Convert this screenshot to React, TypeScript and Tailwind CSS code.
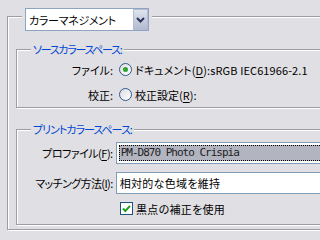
import React from "react";

const font = { fontFamily: '"Noto Sans CJK JP", "Noto Sans", sans-serif' };

function Radio({ checked }: { checked?: boolean }) {
  return (
    <div className="w-[13px] h-[13px] rounded-full border border-[#2f5a8a] bg-gradient-to-br from-[#dcdde3] to-white flex items-center justify-center shrink-0">
      {checked && <div className="w-[5px] h-[5px] rounded-full bg-[#2ea52e]" />}
    </div>
  );
}

function Check() {
  return (
    <div className="w-[13px] h-[13px] border border-[#1c5180] bg-white flex items-center justify-center shrink-0">
      <svg width="9" height="9" viewBox="0 0 9 9">
        <path d="M1 4.5 L3.3 7 L8 1.8" stroke="#21a121" strokeWidth="2" fill="none" />
      </svg>
    </div>
  );
}

function U({ c }: { c: string }) {
  return <span className="underline underline-offset-2">{c}</span>;
}

export default function App() {
  return (
    <div
      className="w-[320px] h-[240px] overflow-hidden bg-[#e0dfe3] pt-[16px] pl-[7px] text-[11px] leading-[12px] text-black [font-feature-settings:'palt']"
      style={font}
    >
      <div className="w-[330px] h-[214px] border border-[#9d9da1] shadow-[inset_1px_1px_0_#fff,1px_1px_0_#fff] pl-[8px]">
        {/* header dropdown */}
        <div className="-mt-[9px] ml-[6px] px-[3px] bg-[#e0dfe3] w-fit">
          <div className="w-[124px] h-[23px] border border-[#8fa3c3] bg-white flex items-center">
            <span className="pl-[3px] flex-1 min-w-0 whitespace-nowrap tracking-[-0.3px]">カラーマネジメント</span>
            <div className="w-[15px] h-[21px] shrink-0 border border-[#b4bccd] bg-gradient-to-b from-[#dfe3ee] to-[#b3bbd2] flex items-center justify-center">
              <svg width="9" height="6" viewBox="0 0 9 6">
                <path d="M1 1 L4.5 4.5 L8 1" stroke="#2b3554" strokeWidth="2" fill="none" />
              </svg>
            </div>
          </div>
        </div>

        {/* source color space */}
        <div className="mt-[18px] w-[320px] h-[59px] border border-[#9d9da1] shadow-[inset_1px_1px_0_#fff,1px_1px_0_#fff]">
          <div className="-mt-[7px] ml-[14px] px-[2px] bg-[#e0dfe3] w-fit text-[#0046d5] whitespace-nowrap tracking-[-1.3px]">
            ソースカラースペース:
          </div>
          <div className="mt-[8px] flex items-center h-[13px]">
            <div className="w-[96px] text-right whitespace-nowrap">ファイル:</div>
            <div className="ml-[6px]">
              <Radio checked />
            </div>
            <div className="ml-[3px] whitespace-nowrap tracking-[0.1px]">
              ドキュメント(<U c="D" />):sRGB IEC61966-2.1
            </div>
          </div>
          <div className="mt-[12px] flex items-center h-[13px]">
            <div className="w-[96px] text-right whitespace-nowrap">校正:</div>
            <div className="ml-[6px]">
              <Radio />
            </div>
            <div className="ml-[3px] whitespace-nowrap">
              校正設定(<U c="R" />):
            </div>
          </div>
        </div>

        {/* print color space */}
        <div className="mt-[21px] w-[320px] h-[96px] border border-[#9d9da1] shadow-[inset_1px_1px_0_#fff,1px_1px_0_#fff]">
          <div className="-mt-[7px] ml-[14px] px-[2px] bg-[#e0dfe3] w-fit text-[#0046d5] whitespace-nowrap tracking-[-1px]">
            プリントカラースペース:
          </div>
          <div className="mt-[7px] flex items-center">
            <div className="w-[96px] text-right whitespace-nowrap tracking-[-0.5px]">
              プロファイル(<U c="F" />):
            </div>
            <div className="ml-[3px] w-[220px] h-[22px] border border-[#7f9db9] bg-white p-[2px]">
              <div className="h-full bg-[#b2b4bf] outline-1 outline-dotted outline-black -outline-offset-1 flex items-center pl-[2px]">
                <span
                  className="text-[11px] tracking-[-1px] whitespace-nowrap text-[#222]"
                  style={{ fontFamily: '"DejaVu Sans Mono", monospace' }}
                >
                  PM-D870 Photo Crispia
                </span>
              </div>
            </div>
          </div>
          <div className="mt-[8px] flex items-center">
            <div className="w-[96px] text-right whitespace-nowrap tracking-[-0.6px]">
              マッチング方法(<U c="I" />):
            </div>
            <div className="ml-[3px] w-[220px] h-[22px] border border-[#7f9db9] bg-white flex items-center pl-[3px] whitespace-nowrap tracking-[0.3px]">
              相対的な色域を維持
            </div>
          </div>
          <div className="mt-[8px] flex items-center ml-[103px]">
            <Check />
            <span className="ml-[3px] whitespace-nowrap tracking-[0.3px]">黒点の補正を使用</span>
          </div>
        </div>
      </div>
    </div>
  );
}
